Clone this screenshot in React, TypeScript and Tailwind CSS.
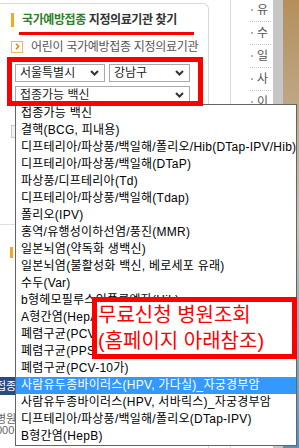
const VACCINES = [
  "접종가능 백신",
  "결핵(BCG, 피내용)",
  "디프테리아/파상풍/백일해/폴리오/Hib(DTap-IPV/Hib)",
  "디프테리아/파상풍/백일해(DTaP)",
  "파상풍/디프테리아(Td)",
  "디프테리아/파상풍/백일해(Tdap)",
  "폴리오(IPV)",
  "홍역/유행성이하선염/풍진(MMR)",
  "일본뇌염(약독화 생백신)",
  "일본뇌염(불활성화 백신, 베로세포 유래)",
  "수두(Var)",
  "b형헤모필루스인플루엔자(Hib)",
  "A형간염(HepA)",
  "폐렴구균(PCV-13가)",
  "폐렴구균(PPSV23)",
  "폐렴구균(PCV-10가)",
  "사람유두종바이러스(HPV, 가다실)_자궁경부암",
  "사람유두종바이러스(HPV, 서바릭스)_자궁경부암",
  "디프테리아/파상풍/백일해/폴리오(DTap-IPV)",
  "B형간염(HepB)",
];
const SELECTED = 16;
const SIDE_MENU = ["유", "수", "일", "사", "이"];

function Chevron() {
  return (
    <svg width="9" height="6" viewBox="0 0 9 6" className="shrink-0">
      <path d="M1 1l3.5 3.5L8 1" stroke="#333" strokeWidth="2" fill="none" />
    </svg>
  );
}

function Select({ label, className }: { label: string; className: string }) {
  return (
    <div
      className={`flex h-[18px] items-center justify-between border border-[#a9a9a9] bg-white pl-[4px] pr-[5px] text-[12px] leading-[16px] text-[#222] ${className}`}
    >
      <span className="whitespace-nowrap">{label}</span>
      <Chevron />
    </div>
  );
}

function LeftPanel() {
  return (
    <div className="mt-[3px] w-[209px] shrink-0 overflow-hidden rounded-tr-[6px] border-t border-r border-[#d9d9d9]">
      <div className="mt-[9px] flex h-[14px] items-center">
        <div className="ml-[11px] h-[14px] w-[3px] bg-[#f5a623]" />
        <span className="ml-[8px] whitespace-nowrap text-[12px] font-bold tracking-[-0.4px]">
          <span className="text-[#2f7f2a]">국가예방접종</span>
          <span className="text-[#333]"> 지정의료기관 찾기</span>
        </span>
      </div>
      <div className="ml-[19px] mt-[5px] h-[3px] w-[175px] bg-[#ff0000]" />
      <div className="mt-[5px] flex h-[13px] items-center">
        <div className="ml-[11px] flex h-[12px] w-[12px] items-center justify-center border border-[#f2b766]">
          <svg width="5" height="7" viewBox="0 0 5 7">
            <path d="M1 0.8l2.6 2.7L1 6.2" stroke="#ee8800" strokeWidth="1.6" fill="none" />
          </svg>
        </div>
        <span className="ml-[8px] whitespace-nowrap text-[12px] tracking-[-0.3px] text-[#555]">
          어린이 국가예방접종 지정의료기관
        </span>
      </div>
      <div className="relative ml-[7px] mt-[4px] h-[49px] w-[196px] pl-[8px] pt-[7px]">
        <div className="flex gap-[4px]">
          <Select label="서울특별시" className="w-[90px]" />
          <Select label="강남구" className="w-[81px]" />
        </div>
        <Select label="접종가능 백신" className="mt-[4px] w-[175px]" />
        <div className="pointer-events-none absolute inset-0 z-20 border-[5px] border-[#ff0000]" />
      </div>
      <div className="ml-[11px] mt-[19px] h-[13px] w-[50px] border border-[#c8c8c8] bg-[#f3f3f3]" />
      <div className="mt-[86px] border-t border-[#e0e0e0]" />
      <div className="ml-[10px] mt-[22px] h-[11px] w-[3px] bg-[#f5a623]" />
      <div className="mt-[119px] h-[18px] whitespace-nowrap bg-[#2b4a7e] -indent-[4px] text-[11px] leading-[18px] text-white">
        접종정보 안내
      </div>
      <div className="mt-[19px] whitespace-nowrap -indent-[4px] text-[11px] leading-[11px] text-[#666]">
        <div>병원은</div>
        <div>000~</div>
      </div>
    </div>
  );
}

function SideMenu() {
  return (
    <div className="w-[43px] shrink-0 border-l border-[#dcdcdc]">
      <div className="-mt-[1px] ml-[19px] w-[21px]">
        {SIDE_MENU.map((item) => (
          <div
            key={item}
            className="flex h-[23px] items-center border-b border-dotted border-[#c8c8c8] pl-[1px] text-[12px] text-[#555]"
          >
            <div className="h-[2px] w-[2px] bg-[#b5b5b5]" />
            <span className="ml-[4px]">{item}</span>
          </div>
        ))}
      </div>
    </div>
  );
}

function VaccineList() {
  return (
    <div className="absolute left-[15px] top-[104px] z-10 w-[282px] overflow-hidden border border-[#646464] bg-white text-[12px] tracking-[0.25px] text-black">
      {VACCINES.map((v, i) => (
        <div
          key={i}
          className={`h-[17px] whitespace-nowrap pl-[5px] leading-[17px] ${
            i === SELECTED ? "bg-[#3399ff] text-white" : ""
          }`}
        >
          {v}
        </div>
      ))}
    </div>
  );
}

export default function App() {
  return (
    <div className="relative h-[448px] w-[299px] overflow-hidden bg-white font-['Liberation_Sans','Noto_Sans_CJK_KR',sans-serif]">
      <div className="flex h-full">
        <LeftPanel />
        <div className="w-[21px] shrink-0" />
        <SideMenu />
        <div className="w-[10px] shrink-0 bg-[#c6c6c6]" />
        <div className="flex-1 bg-gradient-to-b from-[#b48f5c] via-[#c7c3b4] to-[#5d8fb8]" />
      </div>
      <VaccineList />
      <div className="absolute left-[92px] top-[297px] z-30 h-[62px] w-[205px] border-[5px] border-[#ff0000] bg-white pl-[1px] text-[20px] leading-[26px] whitespace-nowrap text-[#ff0000]">
        <div>무료신청 병원조회</div>
        <div>(홈페이지 아래참조)</div>
      </div>
    </div>
  );
}
